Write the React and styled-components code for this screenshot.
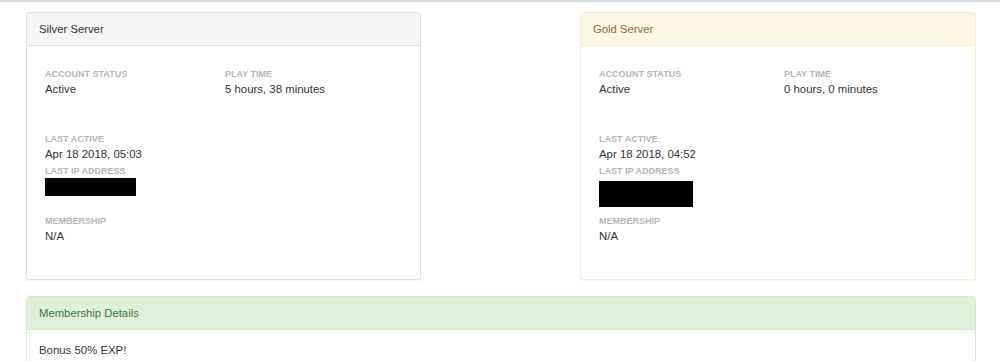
import React from "react";
import styled, { createGlobalStyle } from "styled-components";

const GlobalStyle = createGlobalStyle`
  html, body { margin: 0; padding: 0; background: #fff; }
  body {
    font-family: "Liberation Sans", Arial, Helvetica, sans-serif;
    font-size: 11.3px;
    line-height: 16px;
    color: #333;
  }
`;

const Page = styled.div`
  border-top: 2px solid #d9dee8;
  padding: 10px 24px 0 26px;
`;

const ServerRow = styled.div`
  display: grid;
  grid-template-columns: 395px 396px;
  justify-content: space-between;
  margin-bottom: 16px;
`;

const variants = {
  default: { border: "#ddd", bg: "#f5f5f5", color: "#333" },
  warning: { border: "#faebcc", bg: "#fcf8e3", color: "#8a6d3b" },
  success: { border: "#d6e9c6", bg: "#dff0d8", color: "#3c763d" },
};

const Panel = styled.section`
  border: 1px solid ${(p) => variants[p.$variant].border};
  border-radius: 3.2px;
  background: #fff;
  box-shadow: 0 1px 1px rgba(0, 0, 0, 0.05);
  overflow: hidden;
`;

const PanelHeading = styled.div`
  padding: 8px 12px;
  line-height: 16px;
  font-size: 11.3px;
  background: ${(p) => variants[p.$variant].bg};
  color: ${(p) => variants[p.$variant].color};
  border-bottom: 1px solid ${(p) => variants[p.$variant].border};
`;

const ServerBody = styled.div`
  padding: 22px 18px 35px 18px;
`;

const FieldRow = styled.div`
  display: grid;
  grid-template-columns: ${(p) => p.$split}px 1fr;
`;

const Field = styled.div`
  margin-top: ${(p) => p.$mt || 0}px;
`;

const Label = styled.div`
  font-size: 9px;
  line-height: 13px;
  font-weight: bold;
  color: #b5b5b5;
  text-transform: uppercase;
`;

const Value = styled.div`
  font-size: 11.4px;
  line-height: 16px;
  color: #333;
`;

const RedactedSlot = styled.div`
  height: 37px;
  box-sizing: border-box;
  padding-top: ${(p) => p.$offset}px;
`;

const Redacted = styled.span`
  display: block;
  background: #000;
  width: ${(p) => p.$w}px;
  height: ${(p) => p.$h}px;
`;

const MembershipBody = styled.div`
  padding: 12px;
`;

function ServerPanel({ title, variant, split, status, playTime, lastActive, ip }) {
  return (
    <Panel $variant={variant}>
      <PanelHeading $variant={variant}>{title}</PanelHeading>
      <ServerBody>
        <FieldRow $split={split}>
          <Field>
            <Label>Account Status</Label>
            <Value>{status}</Value>
          </Field>
          <Field>
            <Label>Play Time</Label>
            <Value>{playTime}</Value>
          </Field>
        </FieldRow>
        <Field $mt={36}>
          <Label>Last Active</Label>
          <Value>{lastActive}</Value>
        </Field>
        <Field $mt={3}>
          <Label>Last IP Address</Label>
          <RedactedSlot $offset={ip.offset}>
            <Redacted $w={ip.w} $h={ip.h} />
          </RedactedSlot>
        </Field>
        <Field>
          <Label>Membership</Label>
          <Value>N/A</Value>
        </Field>
      </ServerBody>
    </Panel>
  );
}

export default function App() {
  return (
    <>
      <GlobalStyle />
      <Page>
        <ServerRow>
          <ServerPanel
            title="Silver Server"
            variant="default"
            split={180}
            status="Active"
            playTime="5 hours, 38 minutes"
            lastActive="Apr 18 2018, 05:03"
            ip={{ w: 91, h: 18, offset: 0 }}
          />
          <ServerPanel
            title="Gold Server"
            variant="warning"
            split={185}
            status="Active"
            playTime="0 hours, 0 minutes"
            lastActive="Apr 18 2018, 04:52"
            ip={{ w: 94, h: 26, offset: 3 }}
          />
        </ServerRow>
        <Panel $variant="success">
          <PanelHeading $variant="success">Membership Details</PanelHeading>
          <MembershipBody>
            <Value>Bonus 50% EXP!</Value>
          </MembershipBody>
        </Panel>
      </Page>
    </>
  );
}
